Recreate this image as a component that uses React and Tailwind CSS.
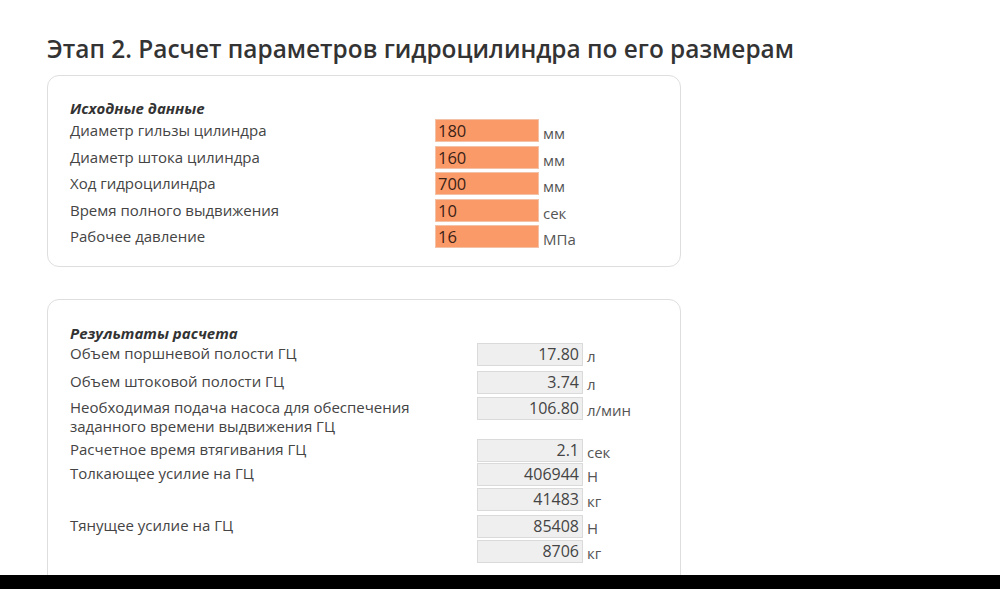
import React from "react";

const font = { fontFamily: '"Open Sans", "Liberation Sans", sans-serif' };

function InRow({ label, value, unit }) {
  return (
    <div className="flex items-start h-[23.5px]">
      <div className="w-[365px] text-[15px] leading-[22px] text-[#444]">{label}</div>
      <div className="w-[104px] h-[23px] bg-[#fb9a69] border border-[#f3c2a6] text-[16.5px] leading-[21px] pl-[2px] text-[#3a2216]">
        {value}
      </div>
      <div className="pl-[4px] pt-[3px] text-[15px] leading-[22px] text-[#555]">{unit}</div>
    </div>
  );
}

function Box({ value, unit }) {
  return (
    <div className="flex items-start">
      <div className="w-[106px] h-[23px] bg-[#efefef] border border-[#dadada] text-[16px] leading-[21px] text-right pr-[3px] text-[#444]">
        {value}
      </div>
      <div className="pl-[4px] pt-[2px] text-[15px] leading-[22px] text-[#555]">{unit}</div>
    </div>
  );
}

function OutRow({ label, boxes, h }) {
  return (
    <div className={"flex items-start shrink-0 " + h}>
      <div className="w-[407px] text-[15px] leading-[19px] pt-[1px] text-[#444]">{label}</div>
      <div className="flex flex-col gap-[1px]">
        {boxes.map((b, i) => (
          <Box key={i} value={b[0]} unit={b[1]} />
        ))}
      </div>
    </div>
  );
}

export default function App() {
  return (
    <div className="w-[1000px] h-[589px] bg-white flex flex-col overflow-hidden" style={font}>
      <div className="flex-1 min-h-0 overflow-hidden pl-[47px] pt-[33px]">
        <h1 className="text-[24.4px] leading-[32px] font-semibold text-[#333]">
          Этап 2. Расчет параметров гидроцилиндра по его размерам
        </h1>
        <div className="mt-[10px] w-[634px] h-[192px] border border-[#dedede] rounded-[12px] pl-[22px] pt-[22px]">
          <div className="text-[15px] leading-[20px] font-bold italic text-[#333]">Исходные данные</div>
          <div className="flex flex-col gap-[3px] mt-[1px]">
            <InRow label="Диаметр гильзы цилиндра" value="180" unit="мм" />
            <InRow label="Диаметр штока цилиндра" value="160" unit="мм" />
            <InRow label="Ход гидроцилиндра" value="700" unit="мм" />
            <InRow label="Время полного выдвижения" value="10" unit="сек" />
            <InRow label="Рабочее давление" value="16" unit="МПа" />
          </div>
        </div>
        <div className="mt-[32px] w-[634px] h-[300px] border border-[#dedede] rounded-[12px] pl-[22px] pt-[23px]">
          <div className="text-[15px] leading-[20px] font-bold italic text-[#333]">Результаты расчета</div>
          <div className="flex flex-col mt-[0px]">
            <OutRow h="h-[28px]" label="Объем поршневой полости ГЦ" boxes={[["17.80", "л"]]} />
            <OutRow h="h-[26px]" label="Объем штоковой полости ГЦ" boxes={[["3.74", "л"]]} />
            <OutRow
              h="h-[42px]"
              label={<>Необходимая подача насоса для обеспечения<br />заданного времени выдвижения ГЦ</>}
              boxes={[["106.80", "л/мин"]]}
            />
            <OutRow h="h-[24px]" label="Расчетное время втягивания ГЦ" boxes={[["2.1", "сек"]]} />
            <OutRow h="h-[52px]" label="Толкающее усилие на ГЦ" boxes={[["406944", "Н"], ["41483", "кг"]]} />
            <OutRow h="h-[50px]" label="Тянущее усилие на ГЦ" boxes={[["85408", "Н"], ["8706", "кг"]]} />
          </div>
        </div>
      </div>
      <div className="h-[14px] bg-black shrink-0" />
    </div>
  );
}
